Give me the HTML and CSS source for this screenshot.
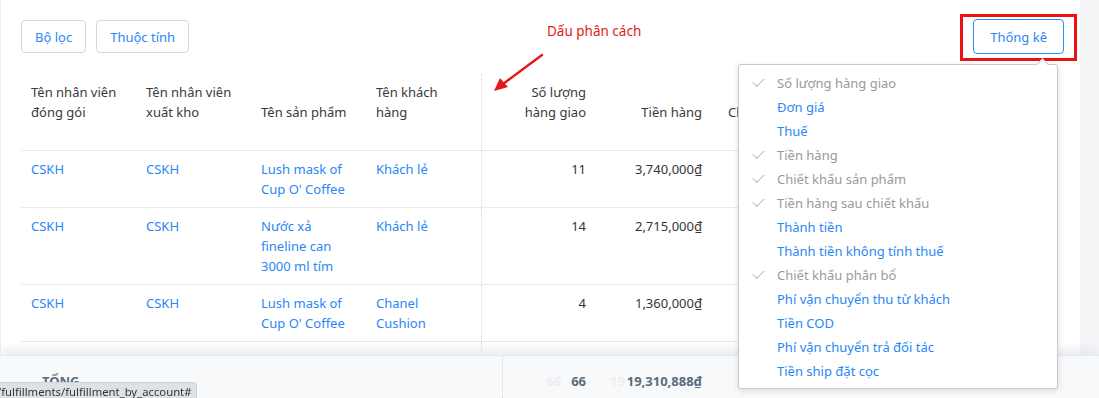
FILE: index.html
```html
<!DOCTYPE html>
<html lang="vi">
<head>
    <meta charset="UTF-8">
    <meta name="viewport" content="width=device-width, initial-scale=1.0">
    <title>Báo cáo giao hàng</title>
    <link rel="stylesheet" href="styles.css">
</head>
<body>
    <div class="page">
        <div class="main">
            <div class="card">
                <div class="toolbar">
                    <div class="toolbar-left">
                        <button class="btn">Bộ lọc</button>
                        <button class="btn">Thuộc tính</button>
                    </div>
                    <div class="highlight">
                        <button class="btn btn-active">Thống kê</button>
                    </div>
                    <span class="note">Dấu phân cách</span>
                    <svg class="note-arrow" width="60" height="44" viewBox="0 0 60 44">
                        <line x1="51" y1="3" x2="12" y2="32" stroke="#e3191c" stroke-width="2.5" stroke-linecap="round"/>
                        <polygon points="3,39 9,26 17,35" fill="#e3191c"/>
                    </svg>
                </div>

                <table class="report">
                    <colgroup>
                        <col style="width: 115px">
                        <col style="width: 115px">
                        <col style="width: 115px">
                        <col style="width: 115px">
                        <col style="width: 115px">
                        <col style="width: 116px">
                        <col style="width: 140px">
                        <col>
                    </colgroup>
                    <thead>
                        <tr>
                            <th>Tên nhân viên đóng gói</th>
                            <th>Tên nhân viên xuất kho</th>
                            <th>Tên sản phẩm</th>
                            <th>Tên khách hàng</th>
                            <th class="num sep">Số lượng hàng giao</th>
                            <th class="num">Tiền hàng</th>
                            <th class="wide">Chiết khấu sản phẩm</th>
                            <th></th>
                        </tr>
                    </thead>
                    <tbody>
                        <tr>
                            <td><a href="#">CSKH</a></td>
                            <td><a href="#">CSKH</a></td>
                            <td><a href="#">Lush mask of Cup O' Coffee</a></td>
                            <td><a href="#">Khách lẻ</a></td>
                            <td class="num sep">11</td>
                            <td class="num">3,740,000₫</td>
                            <td></td>
                            <td></td>
                        </tr>
                        <tr>
                            <td><a href="#">CSKH</a></td>
                            <td><a href="#">CSKH</a></td>
                            <td><a href="#">Nước xả fineline can 3000 ml tím</a></td>
                            <td><a href="#">Khách lẻ</a></td>
                            <td class="num sep">14</td>
                            <td class="num">2,715,000₫</td>
                            <td></td>
                            <td></td>
                        </tr>
                        <tr>
                            <td><a href="#">CSKH</a></td>
                            <td><a href="#">CSKH</a></td>
                            <td><a href="#">Lush mask of Cup O' Coffee</a></td>
                            <td><a href="#">Chanel Cushion</a></td>
                            <td class="num sep">4</td>
                            <td class="num">1,360,000₫</td>
                            <td></td>
                            <td></td>
                        </tr>
                        <tr class="cut">
                            <td><a href="#">CSKH</a></td>
                            <td><a href="#">CSKH</a></td>
                            <td><a href="#">Nước xả fineline</a></td>
                            <td><a href="#">Khách lẻ</a></td>
                            <td class="num sep">37</td>
                            <td class="num">11,495,888₫</td>
                            <td></td>
                            <td></td>
                        </tr>
                    </tbody>
                </table>
            </div>
            <div class="side"></div>
        </div>

        <div class="footer">
            <div class="total-label">TỔNG</div>
            <div class="total-cell qty">
                <span class="ghost">66</span>
                <span>66</span>
            </div>
            <div class="total-cell money">
                <span class="ghost ghost-money">19</span>
                <span>19,310,888₫</span>
            </div>
        </div>

        <div class="menu">
            <ul>
                <li class="checked">Số lượng hàng giao</li>
                <li>Đơn giá</li>
                <li>Thuế</li>
                <li class="checked">Tiền hàng</li>
                <li class="checked">Chiết khấu sản phẩm</li>
                <li class="checked">Tiền hàng sau chiết khấu</li>
                <li>Thành tiền</li>
                <li>Thành tiền không tính thuế</li>
                <li class="checked">Chiết khấu phân bổ</li>
                <li>Phí vận chuyển thu từ khách</li>
                <li>Tiền COD</li>
                <li>Phí vận chuyển trả đối tác</li>
                <li>Tiền ship đặt cọc</li>
            </ul>
        </div>
    </div>

    <div class="statusbar">/fulfillments/fulfillment_by_account#</div>
</body>
</html>
```

FILE: styles.css
```css
body {
    margin: 0;
    font-family: "Noto Sans", "Open Sans", sans-serif;
    font-size: 13px;
    color: #363636;
    background-color: #f4f5f7;
    overflow: hidden;
}
.page {
    position: relative;
    display: flex;
    flex-direction: column;
    height: 398px;
}
.main {
    display: flex;
    height: 355px;
}
.card {
    position: relative;
    width: 1079px;
    background-color: #fff;
    border-left: 1px solid #eceef1;
    overflow: hidden;
}
.side {
    flex: 1;
    background-color: #f4f5f7;
}

/* thanh công cụ */
.toolbar {
    position: relative;
    display: flex;
    justify-content: space-between;
    align-items: flex-start;
    height: 74px;
    padding: 14px 3px 0 20px;
    box-sizing: border-box;
}
.toolbar-left {
    display: flex;
    gap: 10px;
    margin-top: 6px;
}
.btn {
    height: 33px;
    padding: 0 13px;
    font-family: inherit;
    font-size: 13px;
    color: #2e86f5;
    background-color: #fff;
    border: 1px solid #d3d9e2;
    border-radius: 4px;
}
.btn-active {
    height: 35px;
    padding: 0 16px;
    border-color: #2b8ff5;
}
.highlight {
    display: flex;
    padding: 2px 10px 4px 10px;
    border: 3px solid #ee1111;
}
.note {
    position: absolute;
    left: 546px;
    top: 22px;
    font-size: 13.5px;
    color: #e3191c;
}
.note-arrow {
    position: absolute;
    left: 490px;
    top: 52px;
}

/* bảng */
.report {
    margin-left: 20px;
    width: 1037px;
    table-layout: fixed;
    border-collapse: collapse;
    line-height: 20px;
}
.report th {
    padding: 8px 10px 28px 10px;
    font-weight: normal;
    text-align: left;
    vertical-align: bottom;
    color: #3a3a3a;
    border-bottom: 1px solid #e8eaed;
}
.report th.wide {
    padding-left: 16px;
    white-space: nowrap;
}
.report th.sep {
    padding-left: 22px;
}
.report td {
    padding: 8px 10px;
    vertical-align: top;
    border-bottom: 1px solid #e8eaed;
}
.report tr.cut td {
    padding-top: 10px;
}
.report a {
    color: #2a87f5;
    text-decoration: none;
}
.report .num {
    text-align: right;
}
.report .sep {
    border-left: 1px dotted #d8d8d8;
}

/* menu thống kê */
.menu {
    position: absolute;
    left: 738px;
    top: 64px;
    width: 318px;
    background-color: #fff;
    border: 1px solid #c9c9c9;
    border-radius: 3px;
    box-shadow: 0 2px 6px rgba(0, 0, 0, 0.12);
    z-index: 4;
}
.menu::before {
    content: "";
    position: absolute;
    top: -5px;
    right: 10px;
    width: 8px;
    height: 8px;
    background-color: #fff;
    border-left: 1px solid #c9c9c9;
    border-top: 1px solid #c9c9c9;
    transform: rotate(45deg);
}
.menu ul {
    list-style: none;
    margin: 0;
    padding: 6px 0 5px 0;
}
.menu li {
    position: relative;
    padding-left: 38px;
    line-height: 24px;
    color: #2a87f5;
}
.menu li.checked {
    color: #9a9a9a;
}
.menu li.checked::before {
    content: "";
    position: absolute;
    left: 14px;
    top: 7px;
    width: 10px;
    height: 5px;
    border-left: 1.3px solid #bdbdbd;
    border-bottom: 1.3px solid #bdbdbd;
    transform: rotate(-45deg);
}

/* dòng tổng */
.footer {
    position: relative;
    z-index: 2;
    display: flex;
    flex: 1;
    background-color: #f8f9fa;
    border-top: 1px solid #e4e8ee;
    box-shadow: 0 -6px 8px rgba(220, 226, 238, 0.6);
    font-weight: bold;
    font-size: 13px;
    color: #5b6b80;
    line-height: 20px;
}
.total-label {
    width: 460px;
    padding: 15px 0 0 42px;
}
.total-cell {
    position: relative;
    display: flex;
    justify-content: flex-end;
    gap: 10px;
    padding: 15px 10px 0 0;
    box-sizing: border-box;
}
.qty {
    width: 94px;
    border-left: 1px dotted #d8d8d8;
}
.money {
    width: 116px;
}
.ghost {
    color: #eceef1;
}
.ghost-money {
    position: absolute;
    left: 14px;
}

.statusbar {
    position: fixed;
    left: 0;
    bottom: 0;
    height: 15px;
    padding: 0 4px 0 0;
    text-indent: -3px;
    font-size: 11.3px;
    line-height: 17px;
    color: #333;
    background-color: #dee1e6;
    border-top: 1px solid #cfd3d8;
    border-right: 1px solid #cfd3d8;
    border-top-right-radius: 4px;
    z-index: 5;
}
```
